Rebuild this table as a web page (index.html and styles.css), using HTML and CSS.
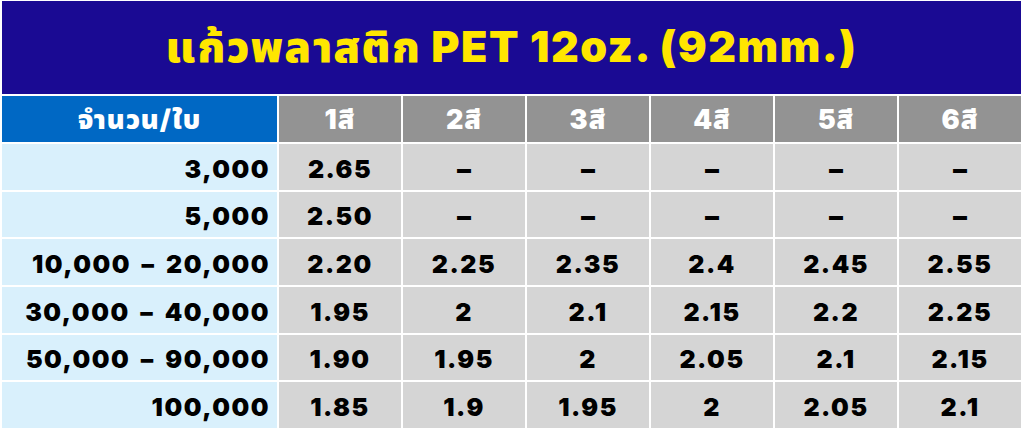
FILE: index.html
```html
<!DOCTYPE html>
<html lang="th">
<head>
<meta charset="utf-8">
<title>แก้วพลาสติก PET 12oz. (92mm.)</title>
<link rel="stylesheet" href="styles.css">
</head>
<body>
<div class="sheet">
  <div class="title">แก้วพลาสติก PET 12oz. (92mm.)</div>

  <div class="hd hd-qty">จำนวน/ใบ</div>
  <div class="hd">1สี</div>
  <div class="hd">2สี</div>
  <div class="hd">3สี</div>
  <div class="hd">4สี</div>
  <div class="hd">5สี</div>
  <div class="hd">6สี</div>

  <div class="qty">3,000</div>
  <div class="val">2.65</div>
  <div class="val dash">–</div>
  <div class="val dash">–</div>
  <div class="val dash">–</div>
  <div class="val dash">–</div>
  <div class="val dash">–</div>

  <div class="qty">5,000</div>
  <div class="val">2.50</div>
  <div class="val dash">–</div>
  <div class="val dash">–</div>
  <div class="val dash">–</div>
  <div class="val dash">–</div>
  <div class="val dash">–</div>

  <div class="qty">10,000 – 20,000</div>
  <div class="val">2.20</div>
  <div class="val">2.25</div>
  <div class="val">2.35</div>
  <div class="val">2.4</div>
  <div class="val">2.45</div>
  <div class="val">2.55</div>

  <div class="qty">30,000 – 40,000</div>
  <div class="val">1.95</div>
  <div class="val">2</div>
  <div class="val">2.1</div>
  <div class="val">2.15</div>
  <div class="val">2.2</div>
  <div class="val">2.25</div>

  <div class="qty">50,000 – 90,000</div>
  <div class="val">1.90</div>
  <div class="val">1.95</div>
  <div class="val">2</div>
  <div class="val">2.05</div>
  <div class="val">2.1</div>
  <div class="val">2.15</div>

  <div class="qty">100,000</div>
  <div class="val">1.85</div>
  <div class="val">1.9</div>
  <div class="val">1.95</div>
  <div class="val">2</div>
  <div class="val">2.05</div>
  <div class="val">2.1</div>
</div>
</body>
</html>
```
FILE: styles.css
```css
html, body {
  margin: 0;
  padding: 0;
  background: #ffffff;
}

body {
  font-family: "Inter", "Noto Sans Thai", "Noto Sans", "DejaVu Sans", sans-serif;
  font-weight: 900;
}

.sheet {
  display: grid;
  grid-template-columns: 275px repeat(6, 122px);
  grid-template-rows: 93px 46px repeat(6, 45.67px);
  gap: 2px;
  padding: 1px 0 0 2px;
  width: 1019px;
}

.title {
  grid-column: 1 / -1;
  background: #1a0a93;
  color: #ffe600;
  font-size: 43px;
  display: flex;
  align-items: center;
  justify-content: center;
  letter-spacing: 1.5px;
  padding-top: 2px;
}

.hd {
  background: #939393;
  color: #ffffff;
  font-size: 27px;
  display: flex;
  align-items: center;
  justify-content: center;
  letter-spacing: 1px;
  padding-top: 2px;
}

.hd-qty {
  background: #0068c4;
}

.qty {
  background: #d9f0fc;
  color: #000000;
  font-size: 25px;
  letter-spacing: 1.5px;
  word-spacing: 4px;
  display: flex;
  align-items: center;
  justify-content: flex-end;
  padding: 4px 7px 0 0;
}

.val {
  background: #d5d5d5;
  color: #000000;
  font-size: 25px;
  letter-spacing: 1.5px;
  display: flex;
  align-items: center;
  justify-content: center;
  padding-top: 4px;
}

.dash {
  font-size: 28px;
  letter-spacing: 0;
}
```
